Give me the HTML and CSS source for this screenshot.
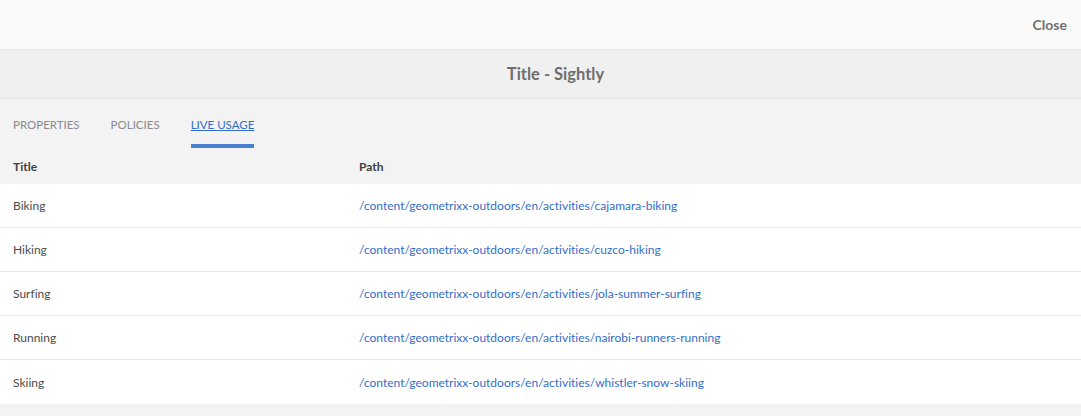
FILE: index.html
```html
<!DOCTYPE html>
<html>
<head>
<meta charset="utf-8">
<link rel="stylesheet" href="styles.css">
</head>
<body>
<div class="topbar"><span class="close">Close</span></div>
<div class="titlebar">Title - Sightly</div>
<div class="content">
  <nav class="tabs">
    <span class="tab">PROPERTIES</span>
    <span class="tab">POLICIES</span>
    <span class="tab active">LIVE USAGE</span>
  </nav>
  <table class="usage">
    <thead>
      <tr><th class="c1">Title</th><th>Path</th></tr>
    </thead>
    <tbody>
      <tr><td class="c1">Biking</td><td><a href="#">/content/geometrixx-outdoors/en/activities/cajamara-biking</a></td></tr>
      <tr><td class="c1">Hiking</td><td><a href="#">/content/geometrixx-outdoors/en/activities/cuzco-hiking</a></td></tr>
      <tr><td class="c1">Surfing</td><td><a href="#">/content/geometrixx-outdoors/en/activities/jola-summer-surfing</a></td></tr>
      <tr><td class="c1">Running</td><td><a href="#">/content/geometrixx-outdoors/en/activities/nairobi-runners-running</a></td></tr>
      <tr><td class="c1">Skiing</td><td><a href="#">/content/geometrixx-outdoors/en/activities/whistler-snow-skiing</a></td></tr>
    </tbody>
  </table>
</div>
</body>
</html>
```
FILE: styles.css
```css
html, body {
  margin: 0;
  padding: 0;
  background: #f3f3f3;
  font-family: "Lato", "Liberation Sans", sans-serif;
  font-variant-ligatures: none;
  height: 100%;
}
.topbar {
  height: 49px;
  background: #fafafa;
  border-bottom: 1px solid #e3e3e3;
  display: flex;
  align-items: center;
  justify-content: flex-end;
  padding-right: 14px;
}
.close {
  font-size: 14px;
  font-weight: bold;
  color: #707070;
}
.titlebar {
  height: 48px;
  background: #f0f0f0;
  border-bottom: 1px solid #e2e2e2;
  display: flex;
  align-items: center;
  justify-content: center;
  padding-left: 30px;
  font-size: 16.5px;
  font-weight: bold;
  color: #6e6e6e;
}
.content {
  background: #f3f3f3;
}
.tabs {
  display: flex;
  gap: 31px;
  padding: 0 13px;
  height: 49px;
}
.tab {
  font-size: 11.5px;
  color: #8a8a8a;
  padding-top: 19px;
  box-sizing: border-box;
  height: 49px;
}
.tab.active {
  color: #326ec8;
  text-decoration: underline;
  border-bottom: 4px solid #4a7fd0;
}
.usage {
  width: 100%;
  border-collapse: collapse;
  font-size: 12px;
}
.usage th {
  text-align: left;
  font-weight: bold;
  color: #404040;
  height: 36px;
  padding: 0;
  vertical-align: middle;
}
.usage td {
  height: 43px;
  background: #fff;
  color: #4b4b4b;
  border-bottom: 1px solid #e8e8e8;
  padding: 0;
}
.usage tbody tr:last-child td {
  border-bottom: none;
  height: 44px;
}
.usage .c1 {
  width: 346px;
  padding-left: 13px;
}
.usage a {
  color: #326ec8;
  text-decoration: none;
}
```
